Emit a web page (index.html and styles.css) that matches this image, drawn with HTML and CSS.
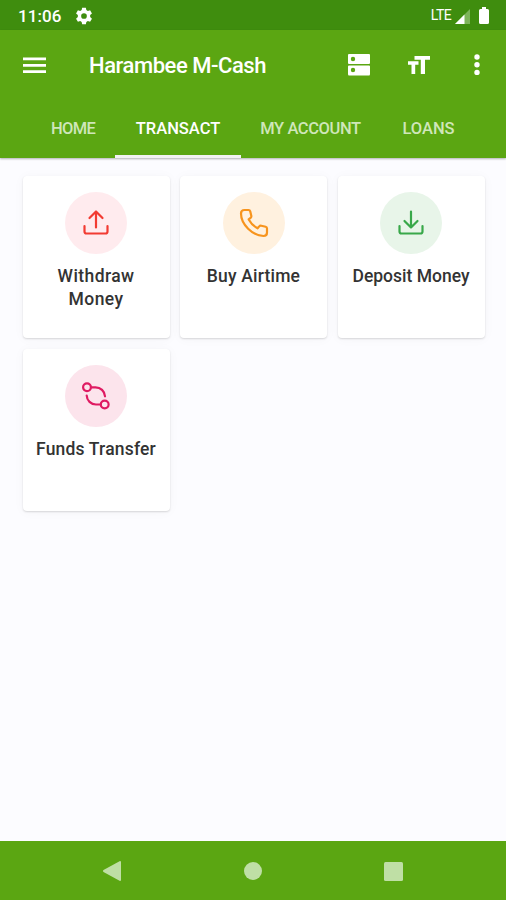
FILE: index.html
```html
<!DOCTYPE html>
<html lang="en">
<head>
<meta charset="utf-8">
<title>Harambee M-Cash</title>
<link rel="stylesheet" href="styles.css">
</head>
<body>
<div class="status">
  <span class="time">11:06</span>
  <svg class="gear" width="18" height="18" viewBox="0 0 24 24"><path fill="#fff" fill-rule="evenodd" d="M9.500 1h5l.6 3.100 2 1.100 3-1 2.500 4.300-2.400 2.100v2.800l2.400 2.100-2.500 4.300-3-1-2 1.100-.6 3.100h-5l-.6-3.100-2-1.100-3 1-2.500-4.300 2.400-2.100v-2.800L1.400 8.500l2.500-4.300 3 1 2-1.100zM12 8.200a3.800 3.800 0 1 0 0 7.600 3.800 3.800 0 0 0 0-7.600z"/></svg>
  <span class="lte">LTE</span>
  <svg class="signal" width="15" height="15" viewBox="0 0 15 15"><path fill="#7db45a" d="M15 0v15H0z"/><path fill="#fff" d="M9.500 5.500V15H0z"/></svg>
  <svg class="battery" width="10" height="17" viewBox="0 0 10 17"><path fill="#fff" d="M3 0h4v2h1.500Q10 2 10 3.500v12Q10 17 8.500 17h-7Q0 17 0 15.500v-12Q0 2 1.500 2H3z"/></svg>
</div>
<header class="header">
  <div class="toolbar">
    <svg class="menu" width="23" height="17" viewBox="0 0 23 17"><path fill="#fff" d="M0 .5h23v2.800H0zM0 6.900h23v2.800H0zM0 13.200h23V16H0z"/></svg>
    <h1 class="title"><span>Harambee M-Cash</span></h1>
    <svg class="server" width="22" height="22" viewBox="0 0 22 22"><path fill="#fff" fill-rule="evenodd" d="M1 0h20q1 0 1 1v8q0 1-1 1H1Q0 10 0 9V1q0-1 1-1zm4 2.800a2.200 2.200 0 1 0 0 4.400 2.200 2.200 0 0 0 0-4.400zM1 11.500h20q1 0 1 1V20q0 1.500-1 1.500H1Q0 21.500 0 20v-7.500q0-1 1-1zm4 2.300a2.200 2.200 0 1 0 0 4.400 2.200 2.200 0 0 0 0-4.400z"/></svg>
    <svg class="textsize" width="22" height="19" viewBox="0 0 22 19"><path fill="#fff" d="M6.500 0H22v3.800h-5V18h-4.200V3.800H6.500zM0 5.200h10.500v3.600H7.200V18H3.500V8.800H0z"/></svg>
    <svg class="more" width="6" height="22" viewBox="0 0 6 22"><g fill="#fff"><circle cx="3" cy="3" r="2.700"/><circle cx="3" cy="10.700" r="2.700"/><circle cx="3" cy="18.400" r="2.700"/></g></svg>
  </div>
  <nav class="tabs">
    <a class="tab home"><span>HOME</span></a>
    <a class="tab transact active"><span>TRANSACT</span></a>
    <a class="tab account"><span>MY ACCOUNT</span></a>
    <a class="tab loans"><span>LOANS</span></a>
  </nav>
</header>
<main class="grid">
  <section class="card">
    <div class="disc red"><svg width="26" height="26" viewBox="0 0 26 26"><path d="M1.500 16v5.500q0 2 2 2h19q2 0 2-2V16M13 17.500v-16M6.500 8 13 1.500 19.500 8"/></svg></div>
    <p class="label withdraw">Withdraw<br>Money</p>
  </section>
  <section class="card">
    <div class="disc orange"><svg width="28" height="28" viewBox="0 0 28 28"><path d="M4.500 1h4q1.400 0 1.700 1.300l1.100 4.400q.3 1.300-.7 2.100L8.700 10.400Q11.700 16 17.600 19.300l1.600-1.900q.8-1 2.100-.7l4.400 1.100q1.300.3 1.300 1.700v4q0 3.500-3.500 3.500C12.500 26.500 1 15.500 1 4.500Q1 1 4.500 1z"/></svg></div>
    <p class="label airtime">Buy Airtime</p>
  </section>
  <section class="card">
    <div class="disc green"><svg width="26" height="26" viewBox="0 0 26 26"><path d="M1.500 16v5.500q0 2 2 2h19q2 0 2-2V16M13 1.500v16M6.500 11l6.500 6.500 6.500-6.500"/></svg></div>
    <p class="label deposit">Deposit Money</p>
  </section>
  <section class="card">
    <div class="disc pink"><svg width="28" height="28" viewBox="0 0 28 28"><circle cx="5" cy="5.300" r="3.900"/><circle cx="22.700" cy="22.500" r="3.900"/><path d="M9 5.300h4.500A9.500 9.500 0 0 1 23 14.300M18.700 22.500H14A9.300 9.300 0 0 1 4.700 13.500"/></svg></div>
    <p class="label funds">Funds Transfer</p>
  </section>
</main>
<footer class="navbar">
  <svg width="18" height="20" viewBox="0 0 18 20"><path fill="#bfdfa5" d="M17 0q1 0 1 1v18q0 1-1 1L.5 11q-1-1 0-2z"/></svg>
  <svg width="18" height="18" viewBox="0 0 18 18"><circle fill="#bfdfa5" cx="9" cy="9" r="9"/></svg>
  <svg width="19" height="19" viewBox="0 0 19 19"><rect fill="#bfdfa5" width="19" height="19" rx="1.500"/></svg>
</footer>
</body>
</html>
```
FILE: styles.css
```css
* { box-sizing: border-box; }
body {
  margin: 0;
  height: 900px;
  display: flex;
  flex-direction: column;
  overflow: hidden;
  background: #fcfcff;
  font-family: Roboto, "Liberation Sans", sans-serif;
  font-weight: 500;
}
svg { display: block; flex: none; }
.status {
  height: 30px;
  flex: none;
  display: flex;
  align-items: center;
  padding: 1px 17px 0 18px;
  background: #3f8d0e;
  color: #fff;
}
.time { width: 58px; font-size: 17px; letter-spacing: .1px; }
.gear { margin-left: -1px; }
.lte { margin: -1px 0 0 auto; font-size: 14px; font-weight: 400; letter-spacing: -.6px; }
.signal { margin: 1px 9px 0 4px; }
.header {
  height: 128px;
  flex: none;
  position: relative;
  background: #5ba612;
  color: #fff;
  box-shadow: 0 1px 2px rgba(0, 0, 0, .3);
}
.toolbar { height: 70px; display: flex; align-items: center; padding: 0 26px 0 23px; }
.title { margin: 2px 0 0 43px; width: 259px; font-size: 22px; font-weight: 500; line-height: 26px; letter-spacing: -.45px; white-space: nowrap; }
.textsize { margin-left: 38px; }
.more { margin-left: auto; }
.tabs { display: flex; height: 58px; padding-left: 31px; }
.tab {
  display: flex;
  justify-content: center;
  align-items: center;
  padding-top: 2px;
  border-bottom: 3px solid transparent;
  font-size: 16.500px;
  color: #cfe6b9;
  white-space: nowrap;
}
.tab.active { color: #fff; border-color: #f2f2f2; }
.home { width: 84px; letter-spacing: -.7px; }
.transact { width: 126px; }
.account { width: 139px; letter-spacing: -.4px; }
.loans { width: 97px; }
.grid {
  flex: 1;
  display: grid;
  grid-template-columns: repeat(3, 147px);
  grid-auto-rows: 162px;
  gap: 11px 10.500px;
  align-content: start;
  padding: 18px 0 0 22.500px;
}
.card {
  display: flex;
  flex-direction: column;
  align-items: center;
  padding-top: 16px;
  border-radius: 4px;
  background: #fff;
  box-shadow: 0 1px 2px rgba(0, 0, 0, .14), 0 1px 12px rgba(0, 0, 0, .035);
}
.disc { width: 62px; height: 62px; flex: none; border-radius: 50%; display: grid; place-items: center; }
.disc svg { fill: none; stroke: currentColor; stroke-width: 2.200; stroke-linecap: round; stroke-linejoin: round; overflow: visible; }
.red { background: #ffebee; color: #f23b32; }
.orange { background: #fff1df; color: #f7941d; }
.green { background: #e8f5e9; color: #39a84a; }
.pink { background: #fce4ec; color: #df1b62; }
.label { margin: 11px 0 0; font-size: 17.500px; line-height: 22.500px; text-align: center; color: #333; white-space: nowrap; }
.withdraw { letter-spacing: .4px; }
.airtime, .funds { letter-spacing: .18px; }
.navbar {
  height: 59px;
  flex: none;
  display: flex;
  justify-content: space-between;
  align-items: center;
  padding: 1px 103px 0;
  background: #5ba612;
}
```
